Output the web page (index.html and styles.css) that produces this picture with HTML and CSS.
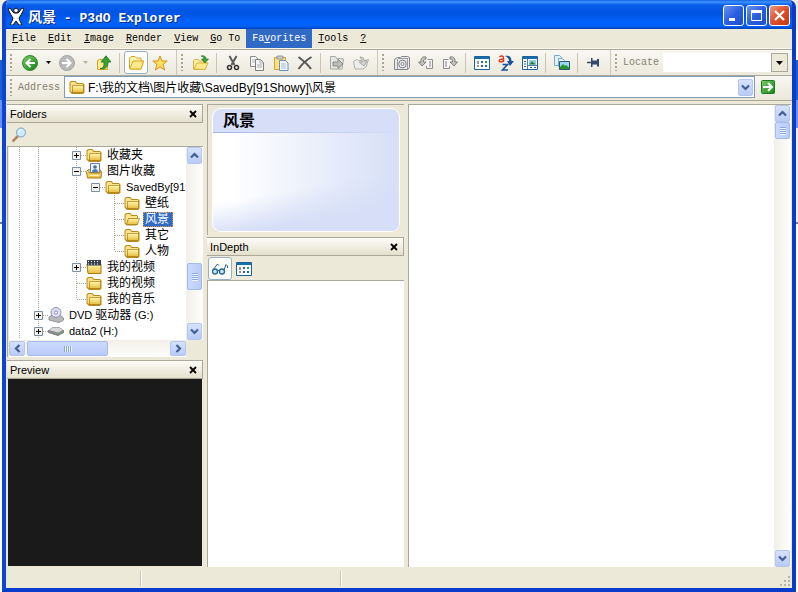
FILE: index.html
```
<!DOCTYPE html>
<html lang="zh-CN">
<head>
    <meta charset="UTF-8">
    <meta name="viewport" content="width=device-width, initial-scale=1.0">
    <title>风景 - P3dO Explorer</title>
    <link rel="stylesheet" href="styles.css">
</head>
<body>
    <!-- shared icons -->
    <svg class="defs" width="0" height="0" aria-hidden="true">
        <defs>
            <linearGradient id="gold" x1="0" y1="0" x2="0" y2="1">
                <stop offset="0" stop-color="#fff7b0"/><stop offset="1" stop-color="#e9bd3c"/>
            </linearGradient>
            <linearGradient id="green" x1="0" y1="0" x2="1" y2="1">
                <stop offset="0" stop-color="#7ccb6c"/><stop offset="1" stop-color="#128414"/>
            </linearGradient>
        </defs>
        <symbol id="folder" viewBox="0 0 16 16">
            <path d="M.5 12.500V3.500L2 2h4.500l1.500 2h6l1.500 1.500v8L14 15H3z" fill="#b98a1c"/>
            <path d="M1.500 12V4l1-1H6l1.500 2H14v2H4.500L3 13z" fill="#fbe58a"/>
            <path d="M3.500 6.500h11V13.500h-11z" fill="url(#gold)" stroke="#a97c14" stroke-width=".7"/>
        </symbol>
        <symbol id="folder-open" viewBox="0 0 16 16">
            <path d="M.5 12.500V3.500L2 2h4.500l1.500 2h5l1 1.500v8L12 14.500H3z" fill="#b98a1c"/>
            <path d="M1.500 12V4l1-1H6l1.500 2H13v2H4.500L2.500 13z" fill="#fbe58a"/>
            <path d="M4.500 7.500h11L13.500 13.500H2.500z" fill="url(#gold)" stroke="#a97c14" stroke-width=".7"/>
        </symbol>
        <symbol id="folder-lit" viewBox="0 0 16 16">
            <path d="M1.500 13.500V3L3 1.500h4L8.500 3h4.500v3h2.500L13 14H2.500z" fill="#fff6b0" stroke="#d9a520"/>
            <path d="M2 13L5 6h10.500L13 14H2.500z" fill="#ffe98a" stroke="#d9a520"/>
        </symbol>
        <symbol id="grid-view" viewBox="0 0 16 16">
            <path d="M.5 1.500h15v13H.5z" fill="#f4fafd" stroke="#1d6299"/>
            <path d="M1 2h14v2H1z" fill="#1b6cab"/>
            <path d="M3 6h2v3H3zM3 10h2v2H3z" fill="#a98f8a"/>
            <path d="M7 6h2v2H7zM7 10h2v2H7z" fill="#3d5f86"/>
            <path d="M11 6h2v2h-2z" fill="#3c8f58"/>
            <path d="M11 10h2v2h-2z" fill="#2f5f98"/>
        </symbol>
        <symbol id="x" viewBox="0 0 8 8"><path d="M1 1l6 6M7 1L1 7" stroke="#000" stroke-width="1.800"/></symbol>
        <symbol id="chev-down" viewBox="0 0 9 9"><path d="M1 2.500l3.500 3.500L8 2.500" fill="none" stroke="#435d96" stroke-width="2.200"/></symbol>
        <symbol id="chev-up" viewBox="0 0 9 9"><path d="M1 6.500L4.500 3 8 6.500" fill="none" stroke="#435d96" stroke-width="2.200"/></symbol>
        <symbol id="chev-left" viewBox="0 0 9 9"><path d="M6.500 1L3 4.500 6.500 8" fill="none" stroke="#435d96" stroke-width="2.200"/></symbol>
        <symbol id="chev-right" viewBox="0 0 9 9"><path d="M2.500 1L6 4.500 2.500 8" fill="none" stroke="#435d96" stroke-width="2.200"/></symbol>
        <symbol id="plus" viewBox="0 0 9 9">
            <path d="M.5.5h8v8h-8z" fill="#f3f1ea" stroke="#7b8ea5"/><path d="M2 4.500h5M4.500 2v5" stroke="#000"/>
        </symbol>
        <symbol id="minus" viewBox="0 0 9 9">
            <path d="M.5.5h8v8h-8z" fill="#f3f1ea" stroke="#7b8ea5"/><path d="M2 4.500h5" stroke="#000"/>
        </symbol>
        <symbol id="drop" viewBox="0 0 7 4"><path d="M0 0h7L3.500 4z" fill="currentColor"/></symbol>
    </svg>

    <div class="window">
        <header class="titlebar">
            <svg class="logo" width="16" height="18" viewBox="0 0 16 18">
                <path d="M0 2l2-1 3 4 1 1h4l1-1 3-4 2 1-3 6-2 3 1 3 2 4h-3l-3-4-3 4H2l2-4 1-3-2-3z" fill="#fff" stroke="#111"/>
                <circle cx="8" cy="3.500" r="2.300" fill="#fff" stroke="#111"/>
            </svg>
            <h1><span class="cjk">风景</span> - P3dO Explorer</h1>
            <div class="win-buttons">
                <button type="button" class="win-btn" aria-label="Minimize">
                    <svg width="13" height="13" viewBox="0 0 13 13"><path d="M2 9h6v3H2z" fill="#fff"/></svg>
                </button>
                <button type="button" class="win-btn" aria-label="Maximize">
                    <svg width="13" height="13" viewBox="0 0 13 13"><path d="M1.500 2.500h10v9h-10z" fill="none" stroke="#fff"/><path d="M1 1h11v3H1z" fill="#fff"/></svg>
                </button>
                <button type="button" class="win-btn win-close" aria-label="Close">
                    <svg width="13" height="13" viewBox="0 0 13 13"><path d="M2 2l9 9M11 2l-9 9" stroke="#fff" stroke-width="2.200"/></svg>
                </button>
            </div>
        </header>

        <nav class="menubar">
            <button type="button"><u>F</u>ile</button>
            <button type="button"><u>E</u>dit</button>
            <button type="button"><u>I</u>mage</button>
            <button type="button"><u>R</u>ender</button>
            <button type="button"><u>V</u>iew</button>
            <button type="button"><u>G</u>o To</button>
            <button type="button" class="active">Fa<u>v</u>orites</button>
            <button type="button"><u>T</u>ools</button>
            <button type="button"><u>?</u></button>
        </nav>

        <div class="toolbars">
            <div class="band">
                <span class="grip"></span>
                <button type="button" class="tool" aria-label="Back">
                    <svg width="16" height="16" viewBox="0 0 16 16"><circle cx="8" cy="8" r="7.500" fill="url(#green)" stroke="#2f8a2c"/><path d="M13 8H5M8.500 4L4.500 8l4 4" fill="none" stroke="#fff" stroke-width="2"/></svg>
                </button>
                <button type="button" class="tool-drop" aria-label="Back history"><svg width="5" height="3"><use href="#drop"/></svg></button>
                <button type="button" class="tool" aria-label="Forward">
                    <svg width="16" height="16" viewBox="0 0 16 16"><circle cx="8" cy="8" r="7.500" fill="#b9b9b9" stroke="#a3a3a3"/><path d="M3 8h8M7.500 4l4 4-4 4" fill="none" stroke="#fff" stroke-width="2"/></svg>
                </button>
                <button type="button" class="tool-drop dim" aria-label="Forward history"><svg width="5" height="3"><use href="#drop"/></svg></button>
                <button type="button" class="tool" aria-label="Up">
                    <svg width="16" height="16" viewBox="0 0 16 16">
                        <path d="M1.500 14.500v-9l2-1h3l1 1h4v9z" fill="#ffe98a" stroke="#d9a520"/>
                        <path d="M4 13.500c4 0 4-3 4-6.500H5L10 .8 15 7h-3c0 5-3 8-8 6.500z" fill="#38a438" stroke="#1c701f" stroke-width=".8"/>
                    </svg>
                </button>
                <span class="sep"></span>
                <button type="button" class="tool pressed" aria-label="Folders" aria-pressed="true"><svg width="16" height="16"><use href="#folder-lit"/></svg></button>
                <button type="button" class="tool" aria-label="Favorites">
                    <svg width="16" height="16" viewBox="0 0 16 16"><path d="M8 1l2 5h5.200l-4.200 3.500 1.700 5.500L8 11.800 3.300 15 5 9.500.8 6H6z" fill="#ffe061" stroke="#d98f14"/></svg>
                </button>
            </div>

            <div class="band">
                <span class="grip"></span>
                <button type="button" class="tool" aria-label="Copy to folder">
                    <svg width="16" height="16" viewBox="0 0 16 16">
                        <path d="M.5 14V5.500l1-1h4l1 1.500h4v2h4L12 14.500H1z" fill="#fff0a0" stroke="#d9b240"/>
                        <path d="M1 14l3-6h11l-3 6.500z" fill="#ffe98a" stroke="#d9b240"/>
                        <path d="M8 1c3-.5 5 0 5 3h2.500L12 8 8.500 4H11c0-2-1-2-3-3z" fill="#38a438" stroke="#1c701f" stroke-width=".6"/>
                    </svg>
                </button>
                <span class="sep"></span>
                <button type="button" class="tool" aria-label="Cut">
                    <svg width="16" height="16" viewBox="0 0 16 16"><path d="M4.500 1l5 9M11.500 1l-5 9" stroke="#5c5c5c" stroke-width="2"/><circle cx="4.500" cy="12.500" r="2" fill="none" stroke="#333" stroke-width="1.500"/><circle cx="11.500" cy="12.500" r="2" fill="none" stroke="#333" stroke-width="1.500"/></svg>
                </button>
                <button type="button" class="tool" aria-label="Copy">
                    <svg width="16" height="16" viewBox="0 0 16 16"><path d="M1.500 1.500h5l3 3v7h-8z" fill="#f4f4f4" stroke="#8a8a8a"/><path d="M3 5h4M3 7h4" stroke="#bbb"/><path d="M6.500 4.500h5l3 3v8h-8z" fill="#f4f4f4" stroke="#808080"/><path d="M11 5v3h3M8 10h5M8 12h5" fill="none" stroke="#aaa"/></svg>
                </button>
                <button type="button" class="tool" aria-label="Paste">
                    <svg width="16" height="16" viewBox="0 0 16 16"><path d="M1.500 2.500h11v12h-11z" fill="#ffe37a" stroke="#d3a32a"/><path d="M4 1h6v3H4z" fill="#c9ccd3" stroke="#858b98" stroke-width=".8"/><path d="M6.500 5.500h6l2.500 2.500v7.500H6.500z" fill="#f4f9ff" stroke="#6a91bd"/><path d="M8 9h5M8 11h5M8 13h5" stroke="#9dbbdc"/></svg>
                </button>
                <button type="button" class="tool" aria-label="Delete">
                    <svg width="16" height="16" viewBox="0 0 16 16"><path d="M1.500 2c4 3 9 7 12.500 12M14.500 2C9.500 5 5 9 1.500 14" fill="none" stroke="#585858" stroke-width="2"/></svg>
                </button>
                <span class="sep"></span>
                <button type="button" class="tool" aria-label="Move to">
                    <svg width="16" height="16" viewBox="0 0 16 16"><path d="M1.500 1.500h5l1 2h4l3 .5-1.500 10H1.500z" fill="#e6e6e2" stroke="#a9a9a5"/><path d="M4 7h5V4l5 5-5 4.500V11H4z" fill="#bdbdb9" stroke="#8d8d89"/></svg>
                </button>
                <button type="button" class="tool" aria-label="Send to">
                    <svg width="16" height="16" viewBox="0 0 16 16"><path d="M.5 6.500l3-2 2 1h6l4-1L13 12l-3 2H2z" fill="#ededea" stroke="#b1b1ad"/><path d="M7 2c3 0 4 1 4 4h3l-3 5-5-4h3c0-2-1-3-2-5z" fill="#d3d3cf" stroke="#9b9b97" stroke-width=".8"/></svg>
                </button>
            </div>

            <div class="band">
                <span class="grip"></span>
                <button type="button" class="tool" aria-label="Acquire">
                    <svg width="16" height="16" viewBox="0 0 16 16"><path d="M.5 4.500l3-2h3l1-1h6l2 1v10l-2 2h-13z" fill="#e9e9ec" stroke="#85858b"/><path d="M3.500 4v10M13.500 4v10M4 3.500h10" stroke="#9c9ca2"/><circle cx="8.500" cy="9" r="3.800" fill="#fff" stroke="#74747a"/><circle cx="8.500" cy="9" r="1.600" fill="none" stroke="#74747a"/></svg>
                </button>
                <button type="button" class="tool" aria-label="Rotate left">
                    <svg width="16" height="16" viewBox="0 0 16 16"><path d="M8 2C4 1 2.500 4 3 7H.5L4 11l4-4H5.500C5 5 6 4 8 4z" fill="#c4c4c4" stroke="#6d6d6d" stroke-width=".8"/><path d="M9.500 4.500h5v9h-6V11" fill="#f7f7f7" stroke="#8d8d8d"/><path d="M11 6h2v6h-2z" fill="#bcbcbc"/></svg>
                </button>
                <button type="button" class="tool" aria-label="Rotate right">
                    <svg width="16" height="16" viewBox="0 0 16 16"><path d="M6.500 4.500h-5v9h6V11" fill="#f7f7f7" stroke="#8d8d8d"/><path d="M3 6h2v6H3z" fill="#bcbcbc"/><path d="M8 2c4-1 5.500 2 5 5h2.500L12 11 8 7h2.500C11 5 10 4 8 4z" fill="#c4c4c4" stroke="#6d6d6d" stroke-width=".8"/></svg>
                </button>
                <span class="sep"></span>
                <button type="button" class="tool" aria-label="Thumbnails"><svg width="16" height="16"><use href="#grid-view"/></svg></button>
                <button type="button" class="tool" aria-label="Sort">
                    <svg width="16" height="16" viewBox="0 0 16 16"><path d="M1.500 2C3 .5 5.500.5 5.500 3v4M5.500 4C2 4 1 5 1.200 6s3 1.500 4.300-.5" fill="none" stroke="#dd3c22" stroke-width="1.500"/><path d="M4.500 9.500h5l-5 5.500h5.500" fill="none" stroke="#17549d" stroke-width="1.600"/><path d="M7 1c4-1 6.500 1 6.500 5H16l-4 5-3-5h2C11 3.500 10 2.500 7 1z" fill="#14529c"/></svg>
                </button>
                <button type="button" class="tool" aria-label="Layout">
                    <svg width="16" height="16" viewBox="0 0 16 16"><path d="M.5 1.500h15v13H.5z" fill="#fff" stroke="#1d6299"/><path d="M1 2h14v2H1z" fill="#1b6cab"/><path d="M5.500 4v10M6 10.500h9" stroke="#4a7ea8"/><path d="M7 5h7v4.500H7z" fill="#8dcbe8"/><path d="M7 9.500l3-3 4 3z" fill="#2a7b3e"/><path d="M2 6.500h2M2 9h2M2 11.500h2M8 12.500h2M12 12.500h2" stroke="#31597d"/></svg>
                </button>
                <span class="sep"></span>
                <button type="button" class="tool" aria-label="Slide show">
                    <svg width="16" height="16" viewBox="0 0 16 16"><path d="M.5.5h5l2 2v8h-7z" fill="#dff0fb" stroke="#7ba7cb"/><path d="M4.500 3.500h4l2 2v6h-6z" fill="#eef8ff" stroke="#7ba7cb"/><path d="M5.500 6.500h10v8h-10z" fill="#9ad7f2" stroke="#2c5575"/><path d="M6 14v-2l3-3 2 2 1-1 3 2.500V14z" fill="#229628"/></svg>
                </button>
                <span class="sep"></span>
                <button type="button" class="tool" aria-label="Pin">
                    <svg width="16" height="16" viewBox="0 0 16 16"><path d="M1 7.500h5" stroke="#444" stroke-width="1.500"/><path d="M5 3h1.500v2.500H11V4h2v7.500h-2V9.500H6.500V12H5z" fill="#2d4a70"/></svg>
                </button>
            </div>

            <div class="band locate">
                <span class="grip"></span>
                <label for="locate">Locate</label>
                <input type="text" id="locate">
                <button type="button" class="combo-btn" aria-label="Show locate list"><svg width="7" height="4"><use href="#drop"/></svg></button>
            </div>
        </div>

        <div class="addressbar">
            <span class="grip"></span>
            <label for="address">Address</label>
            <div class="address-box">
                <svg width="16" height="16"><use href="#folder"/></svg>
                <input type="text" id="address" value="F:\我的文档\图片收藏\SavedBy[91Showy]\风景">
                <button type="button" class="xp-btn" aria-label="Show address list"><svg width="9" height="9"><use href="#chev-down"/></svg></button>
            </div>
            <button type="button" class="go" aria-label="Go">
                <svg width="14" height="14" viewBox="0 0 14 14"><rect x=".5" y=".5" width="13" height="13" rx="1" fill="url(#green)" stroke="#1c7c1c"/><path d="M2 7h8M7 3l4 4-4 4" fill="none" stroke="#fff" stroke-width="2"/></svg>
            </button>
        </div>

        <main class="panes">
            <aside class="left">
                <div class="pane-head"><h2>Folders</h2><button type="button" aria-label="Close Folders"><svg width="8" height="8"><use href="#x"/></svg></button></div>
                <div class="search-row">
                    <button type="button" class="tool" aria-label="Search">
                        <svg width="16" height="16" viewBox="0 0 16 16"><path d="M1.500 14.500L7 9" stroke="#b08760" stroke-width="2.500"/><circle cx="10" cy="5.500" r="4.500" fill="#cfeafb" stroke="#7c9fc4"/><path d="M8 5c0-1 1-2 2-2" fill="none" stroke="#fff"/></svg>
                    </button>
                </div>
                <div class="tree-box">
                    <ul class="tree">
                        <li><i class="v"></i><i class="v"></i><i></i><i class="v h"><button type="button" aria-label="Expand"><svg width="9" height="9"><use href="#plus"/></svg></button></i><svg width="16" height="16"><use href="#folder"/></svg><span class="cjk">收藏夹</span></li>
                        <li><i class="v"></i><i class="v"></i><i></i><i class="v h"><button type="button" aria-label="Collapse"><svg width="9" height="9"><use href="#minus"/></svg></button></i><svg width="16" height="16" viewBox="0 0 16 16"><path d="M4.500.5h9v9h-9z" fill="#e8f1fa" stroke="#6e7f95"/><circle cx="9" cy="4" r="1.800" fill="#4c6c9e"/><path d="M6 9c0-4 6-4 6 0z" fill="#4d7fb5"/><path d="M.5 8.500L3 6v4h11V7l1.500 1.500-.5 6.500H1.500z" fill="url(#gold)" stroke="#a97c14"/><path d="M4 12.500h9" stroke="#fff7c0"/></svg><span class="cjk">图片收藏</span></li>
                        <li><i class="v"></i><i class="v"></i><i></i><i class="v"></i><i class="h"><button type="button" aria-label="Collapse"><svg width="9" height="9"><use href="#minus"/></svg></button></i><svg width="16" height="16"><use href="#folder"/></svg><span>SavedBy[91</span></li>
                        <li><i class="v"></i><i class="v"></i><i></i><i class="v"></i><i></i><i class="v h"></i><svg width="16" height="16"><use href="#folder"/></svg><span class="cjk">壁纸</span></li>
                        <li><i class="v"></i><i class="v"></i><i></i><i class="v"></i><i></i><i class="v h"></i><svg width="16" height="16"><use href="#folder-open"/></svg><span class="cjk selected">风景</span></li>
                        <li><i class="v"></i><i class="v"></i><i></i><i class="v"></i><i></i><i class="v h"></i><svg width="16" height="16"><use href="#folder"/></svg><span class="cjk">其它</span></li>
                        <li><i class="v"></i><i class="v"></i><i></i><i class="v"></i><i></i><i class="v h end"></i><svg width="16" height="16"><use href="#folder"/></svg><span class="cjk">人物</span></li>
                        <li><i class="v"></i><i class="v"></i><i></i><i class="v h"><button type="button" aria-label="Expand"><svg width="9" height="9"><use href="#plus"/></svg></button></i><svg width="16" height="16" viewBox="0 0 16 16"><path d="M1 5h14v9.500H2z" fill="url(#gold)" stroke="#a97c14"/><path d="M1 1h14v5.500H1z" fill="#3a4250"/><path d="M2 2.500h12M2 5h12" stroke="#fff" stroke-dasharray="1 2"/></svg><span class="cjk">我的视频</span></li>
                        <li><i class="v"></i><i class="v"></i><i></i><i class="v h"></i><svg width="16" height="16"><use href="#folder"/></svg><span class="cjk">我的视频</span></li>
                        <li><i class="v"></i><i class="v"></i><i></i><i class="v h end"></i><svg width="16" height="16"><use href="#folder"/></svg><span class="cjk">我的音乐</span></li>
                        <li><i class="v"></i><i class="v h"><button type="button" aria-label="Expand"><svg width="9" height="9"><use href="#plus"/></svg></button></i><svg width="16" height="16" viewBox="0 0 16 16"><path d="M1 10l3-2h8l3.500 3v2L11 15.500 1 13z" fill="#b9b9bd" stroke="#7d7d84" stroke-width=".8"/><circle cx="8" cy="5.500" r="5" fill="#dcdcf2" stroke="#8f8fae"/><circle cx="8" cy="5.500" r="1.500" fill="#fff" stroke="#8f8fae"/></svg><span>DVD <b class="cjk">驱动器</b> (G:)</span></li>
                        <li><i class="v"></i><i class="v h"><button type="button" aria-label="Expand"><svg width="9" height="9"><use href="#plus"/></svg></button></i><svg width="16" height="16" viewBox="0 0 16 16"><path d="M.5 7.500L5 4.500h6l4.500 3v2L10 12.500.5 9.500z" fill="#8d8d90" stroke="#6b6b6e" stroke-width=".8"/><path d="M1 7l4-2.500h6L15 7l-5 2.500z" fill="#d8d8da"/><circle cx="12" cy="10" r="1" fill="#47c34c"/></svg><span>data2 (H:)</span></li>
                    </ul>
                    <div class="vscroll">
                        <button type="button" class="xp-btn" aria-label="Scroll up"><svg width="9" height="9"><use href="#chev-up"/></svg></button>
                        <div class="space before"></div>
                        <div class="thumb"></div>
                        <div class="space"></div>
                        <button type="button" class="xp-btn" aria-label="Scroll down"><svg width="9" height="9"><use href="#chev-down"/></svg></button>
                    </div>
                    <div class="hscroll">
                        <button type="button" class="xp-btn" aria-label="Scroll left"><svg width="9" height="9"><use href="#chev-left"/></svg></button>
                        <div class="thumb"></div>
                        <div class="space"></div>
                        <button type="button" class="xp-btn" aria-label="Scroll right"><svg width="9" height="9"><use href="#chev-right"/></svg></button>
                    </div>
                </div>
                <div class="pane-head"><h2>Preview</h2><button type="button" aria-label="Close Preview"><svg width="8" height="8"><use href="#x"/></svg></button></div>
                <div class="preview"></div>
            </aside>

            <section class="middle">
                <div class="card-wrap">
                    <div class="card">
                        <h2>风景</h2>
                        <div class="card-body"></div>
                    </div>
                </div>
                <div class="pane-head"><h2>InDepth</h2><button type="button" aria-label="Close InDepth"><svg width="8" height="8"><use href="#x"/></svg></button></div>
                <div class="depth-tools">
                    <button type="button" class="tool pressed" aria-label="Details" aria-pressed="true">
                        <svg width="16" height="16" viewBox="0 0 16 16"><circle cx="3" cy="10.500" r="2.500" fill="#c9e8f5" stroke="#24648f" stroke-width="1.300"/><circle cx="10" cy="10.500" r="2.500" fill="#c9e8f5" stroke="#24648f" stroke-width="1.300"/><path d="M1 9l4.500-6L7 4.500M12 9l2-5.500 1.500 1.500v2M5.500 9.500h2" fill="none" stroke="#24648f"/></svg>
                    </button>
                    <button type="button" class="tool" aria-label="Grid"><svg width="16" height="16"><use href="#grid-view"/></svg></button>
                </div>
                <div class="depth-body"></div>
            </section>

            <section class="right">
                <div class="files"></div>
                <div class="vscroll">
                    <button type="button" class="xp-btn" aria-label="Scroll up"><svg width="9" height="9"><use href="#chev-up"/></svg></button>
                    <div class="thumb small"></div>
                    <div class="space"></div>
                    <button type="button" class="xp-btn" aria-label="Scroll down"><svg width="9" height="9"><use href="#chev-down"/></svg></button>
                </div>
            </section>
        </main>

        <footer class="statusbar">
            <span class="cell first"></span>
            <span class="cell second"></span>
            <svg class="size-grip" width="12" height="12" viewBox="0 0 12 12"><path d="M8 0h2v2H8zM4 4h2v2H4zM8 4h2v2H8zM0 8h2v2H0zM4 8h2v2H4zM8 8h2v2H8z" fill="#b8b4a2"/></svg>
        </footer>
    </div>
</body>
</html>
```
FILE: styles.css
```
* { box-sizing: border-box; }
body {
    margin: 0;
    padding: 0 2px;
    height: 100vh;
    overflow: hidden;
    font-family: "Liberation Sans", "Noto Sans CJK SC", sans-serif;
    font-size: 11px;
    color: #000;
    /* edges of the windows behind */
    background: linear-gradient(#f1eedf 0 30px, #fff 30px 60px, #1d62c8 60px 100px, #6a92e8 100px 128px, #f0f1f6 128px 222px, #777 222px 224px, #fff 224px);
}
button { padding: 0; border: 0; background: none; font: inherit; color: inherit; }
svg { display: block; flex: none; }
.defs { position: absolute; }
h1, h2 { margin: 0; font-weight: normal; }
.cjk { font-size: 12px; font-weight: normal; }

.window {
    display: flex;
    flex-direction: column;
    height: 100%;
    border: 4px solid #0a3ccc;
    border-top: 0;
    border-left-color: #0b45d6;
    border-radius: 7px 7px 0 0;
    background: #ece9d8;
    overflow: hidden;
}

/* title bar */
.titlebar {
    display: flex;
    align-items: center;
    flex: none;
    height: 29px;
    margin: 0 -4px;
    padding: 2px 6px 0 6px;
    background: linear-gradient(#1763e0 0, #3b93ff 2px, #0a5bea 5px, #0054e3 14px, #0062fb 22px, #0062fb 26px, #0040b8 29px);
    color: #fff;
}
.titlebar h1 {
    flex: 1;
    margin-left: 4px;
    font: bold 13px "Liberation Mono", "Noto Sans CJK SC", monospace;
    white-space: pre;
    text-shadow: 1px 1px #0a2a80;
}
.titlebar .cjk { font-size: 14px; font-weight: bold; }
.win-buttons { display: flex; gap: 2px; }
.win-btn {
    display: grid;
    place-items: center;
    width: 21px;
    height: 21px;
    border: 1px solid #fff;
    border-radius: 3px;
    background: linear-gradient(135deg, #6b94f0, #2a5fdf 50%, #1c4ecb);
}
.win-close { background: linear-gradient(135deg, #ec9a80, #de4e29 50%, #c63a14); }

/* menu */
.menubar { display: flex; flex: none; height: 20px; border-bottom: 1px solid #f7f5ee; }
.menubar button {
    padding: 0 6px;
    font: 10px "Liberation Mono", monospace;
}
.menubar .active { background: #316ac5; color: #fff; }

/* toolbars */
.toolbars {
    display: flex;
    flex: none;
    height: 27px;
    border-top: 1px solid #aca899;
    border-bottom: 1px solid #aca899;
    background: linear-gradient(#f8f7f2, #ece9dc);
}
.band {
    display: flex;
    align-items: center;
    flex: none;
    padding-right: 4px;
    border-right: 1px solid #cdc9b8;
}
.grip {
    flex: none;
    width: 3px;
    height: 17px;
    margin: 0 5px 0 4px;
    background: repeating-linear-gradient(#a9a695 0 2px, transparent 2px 4px);
    background-size: 2px 100%;
    background-repeat: no-repeat;
}
.tool {
    display: grid;
    place-items: center;
    width: 24px;
    height: 23px;
    border-radius: 3px;
}
.tool.pressed { border: 1px solid #98b0c4; background: #fdfdfb; }
.tool-drop { display: grid; place-items: center; width: 13px; height: 23px; }
.tool-drop.dim { color: #b4b2a6; }
.sep { width: 1px; height: 20px; margin: 0 4px 0 3px; background: #c9c5b2; }
.band.locate { flex: 1; min-width: 0; border: 0; }
label { font: 10px "Liberation Mono", monospace; color: #85826f; }
.locate input {
    flex: 1;
    width: 0;
    min-width: 0;
    height: 19px;
    margin-left: 4px;
    padding: 0 3px;
    border: 0;
    background: #fff;
    font: inherit;
}
.combo-btn {
    display: grid;
    place-items: center;
    flex: none;
    width: 17px;
    height: 19px;
    border: 1px solid #aca899;
    background: #ece9d8;
}

.addressbar {
    display: flex;
    align-items: center;
    flex: none;
    height: 22px;
    background: linear-gradient(#f8f7f2, #ece9dc);
}
.address-box {
    display: flex;
    align-items: center;
    flex: 1;
    height: 22px;
    margin-left: 4px;
    padding: 0 1px 0 4px;
    border: 1px solid #7f9db9;
    background: #fff;
}
.address-box input {
    flex: 1;
    min-width: 0;
    height: 18px;
    margin-left: 3px;
    padding: 0 0 2px;
    border: 0;
    outline: 0;
    background: none;
    font: 12px "Liberation Sans", "Noto Sans CJK SC", sans-serif;
}
.go { margin: 0 17px 0 6px; }

/* XP style scroll controls */
.xp-btn {
    display: grid;
    place-items: center;
    flex: none;
    width: 15px;
    height: 17px;
    border: 1px solid #b4c6ee;
    border-radius: 2px;
    background: linear-gradient(#d6e2fd, #b9cbf6);
}
.vscroll {
    display: flex;
    flex-direction: column;
    width: 17px;
    padding: 0 1px;
    background: linear-gradient(90deg, #f1efe8, #fefefb);
}
.space { flex: 1; }
.space.before { flex: 3; }
.thumb {
    flex: none;
    height: 27px;
    border: 1px solid #a5baec;
    border-radius: 2px;
    background:
        repeating-linear-gradient(#8ba5de 0 1px, #eef4fe 1px 2px) center / 6px 8px no-repeat,
        linear-gradient(90deg, #cbdafd, #b9ccf9);
}
.thumb.small { height: 17px; }
.hscroll {
    display: flex;
    height: 17px;
    padding: 1px 0;
    background: linear-gradient(#f1efe8, #fefefb);
}
.hscroll .xp-btn { width: 16px; height: 15px; }
.hscroll .thumb {
    width: 46%;
    height: 15px;
    margin-left: 2px;
    background:
        repeating-linear-gradient(90deg, #8ba5de 0 1px, #eef4fe 1px 2px) center / 8px 6px no-repeat,
        linear-gradient(#cbdafd, #b9ccf9);
}

/* panes */
.panes {
    display: grid;
    grid-template-columns: 197px 197px 1fr;
    gap: 4px;
    flex: 1;
    min-height: 0;
    margin-top: 2px;
    padding: 3px 1px 0 0;
    border-top: 1px solid #aca899;
}
.left, .middle { display: flex; flex-direction: column; min-height: 0; }
.left { padding-left: 1px; }
.pane-head {
    display: flex;
    align-items: center;
    justify-content: space-between;
    flex: none;
    height: 19px;
    padding: 0 5px 0 3px;
    border: 1px solid #aca899;
    border-width: 1px 1px 1px 0;
    background: linear-gradient(#fdfcf6, #e4e0cd);
}
.pane-head h2 { font-size: 11px; }
.search-row { flex: none; height: 24px; border-bottom: 1px solid #aca899; }

.tree-box {
    display: grid;
    grid-template-columns: 1fr 17px;
    flex: none;
    margin-bottom: 3px;
    padding-left: 1px;
    border-left: 1px solid #aca899;
}
.tree {
    margin: 0;
    padding: 0 0 1px;
    overflow: hidden;
    list-style: none;
    background: #fff;
    white-space: nowrap;
}
.tree li { display: flex; align-items: center; height: 16px; padding-left: 1px; }
.tree i {
    display: flex;
    align-items: center;
    flex: none;
    width: 19px;
    height: 16px;
}
.tree i.v { background: repeating-linear-gradient(#a8a595 0 1px, transparent 1px 2px) 9px 0 / 1px 16px no-repeat; }
.tree i.end { background-size: 1px 8px; }
.tree i.h { padding-left: 10px; }
.tree i.h:has(button) { padding-left: 5px; }
.tree i.h::after {
    content: "";
    flex: 1;
    height: 1px;
    background: repeating-linear-gradient(90deg, #a8a595 0 1px, transparent 1px 2px);
}
.tree span { margin-left: 3px; padding-left: 2px; line-height: 15px; }
.tree .selected {
    padding-right: 4px;
    outline: 1px dotted #d9954a;
    outline-offset: -1px;
    background: #316ac5;
    color: #fff;
}
.tree-box .hscroll { grid-column: 1; }
.preview { flex: 1; margin: 0 1px 2px 1px; background: #1a1a1a; }

.card-wrap {
    flex: none;
    margin-bottom: 2px;
    padding: 3px 4px;
    border-top: 1px solid #aca899;
    border-left: 1px solid #aca899;
}
.card {
    height: 124px;
    overflow: hidden;
    border: 1px solid #fff;
    border-radius: 9px;
    background: #d6dff7;
}
.card h2 {
    height: 24px;
    padding-left: 10px;
    font: bold 16px/20px "Noto Sans CJK SC", sans-serif;
    background: linear-gradient(90deg, #a5b8e8, #d6dff7) bottom / 100% 1px no-repeat;
}
.card-body {
    height: 98px;
    background:
        linear-gradient(170deg, transparent 54%, #d6dff7 80%),
        linear-gradient(90deg, #fff 10%, #d6dff7);
}
.depth-tools {
    display: flex;
    flex: none;
    height: 25px;
    padding: 1px;
    border-bottom: 1px solid #aca899;
}
.depth-body { flex: 1; margin-bottom: 1px; border-left: 1px solid #aca899; background: #fff; }

.right {
    display: flex;
    margin-bottom: 1px;
    border-top: 1px solid #aca899;
    border-left: 1px solid #aca899;
    background: #fff;
}
.files { flex: 1; }

/* status bar */
.statusbar { display: flex; align-items: center; flex: none; height: 20px; }
.cell { height: 15px; border-right: 1px solid #c9c5b2; box-shadow: 1px 0 #fff; }
.cell.first { width: 135px; }
.cell.second { width: 200px; }
.size-grip { align-self: flex-end; margin-left: auto; }
```
